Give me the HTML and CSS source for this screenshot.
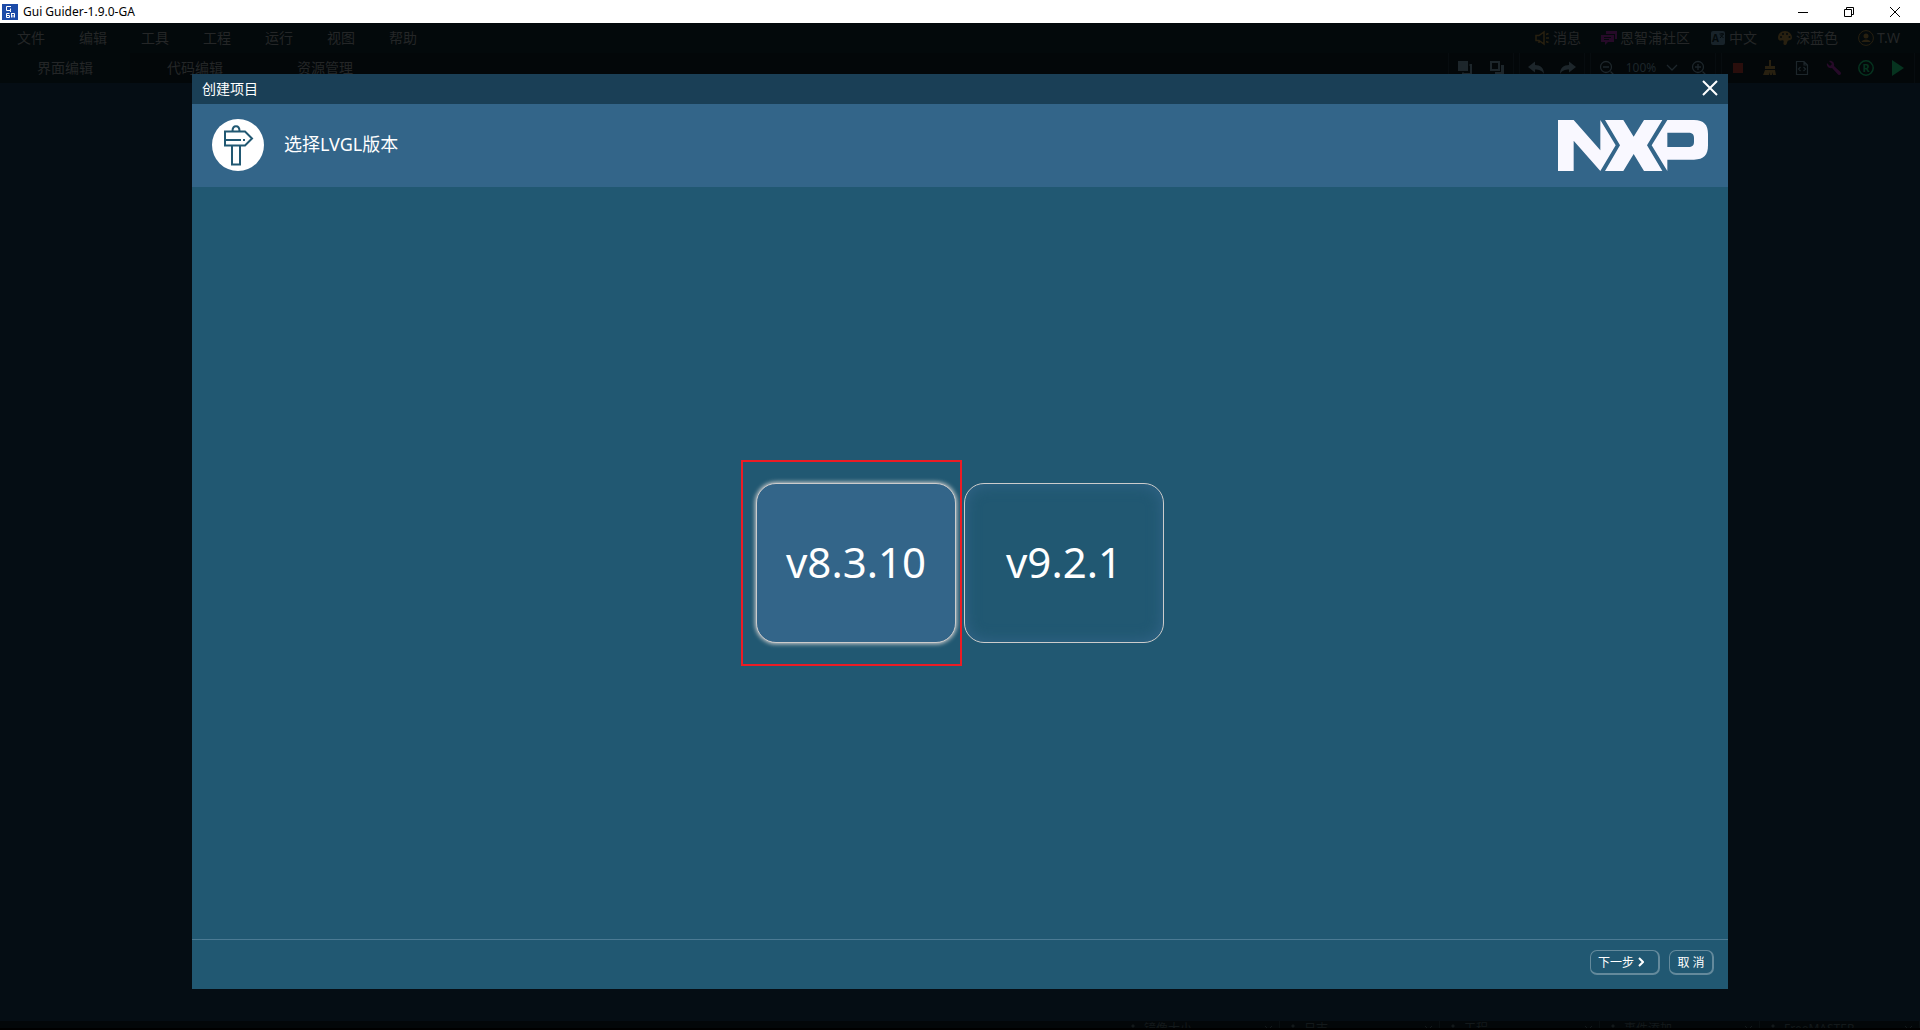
FILE: index.html
```html
<!DOCTYPE html>
<html lang="zh-CN">
<head>
    <meta charset="UTF-8" />
    <meta name="viewport" content="width=device-width, initial-scale=1.0"/>
    <title>Gui Guider-1.9.0-GA</title>
    <link rel="stylesheet" href="styles.css">
</head>
<body>
<!-- Window title bar -->
<header class="window-bar">
    <svg class="app-icon" viewBox="0 0 16 16">
        <rect width="16" height="16" fill="#1c4ba8"/>
        <path d="M9 2.500H4.500V6.500H8.500V4.500M8.500 6.500V8M4.500 9.500V13.500H7.500V11.500H5M4.500 9.500H7.500M9.500 9V13.500M9.500 9.500H12.500V13.500M11 11V13.500" fill="none" stroke="#fff" stroke-width="1"/>
    </svg>
    <span class="window-title">Gui Guider-1.9.0-GA</span>
    <div class="window-controls">
        <button aria-label="最小化"><svg width="10" height="10" viewBox="0 0 10 10"><path d="M0 5.500H10"/></svg></button>
        <button aria-label="还原"><svg width="10" height="10" viewBox="0 0 10 10"><path d="M.5 2.500H7.500V9.500H.5ZM2.500 2.500V.5H9.500V7.500H7.500"/></svg></button>
        <button aria-label="关闭"><svg width="10" height="10" viewBox="0 0 10 10"><path d="M0 0L10 10M10 0L0 10"/></svg></button>
    </div>
</header>

<div class="app">
    <!-- Menu -->
    <div class="menu-bar">
        <nav class="menu">
            <button>文件</button>
            <button>编辑</button>
            <button>工具</button>
            <button>工程</button>
            <button>运行</button>
            <button>视图</button>
            <button>帮助</button>
        </nav>
        <div class="menu-right">
            <button>
                <svg class="gold" viewBox="0 0 16 16"><path d="M2 5.500H5L10 2V14L5 10.500H2ZM5 10.500V13M12 8H15M12 4.500L14.500 3.500M12 11.500L14.500 12.500" fill="none" stroke="currentColor" stroke-width="1.500"/></svg>
                消息
            </button>
            <button>
                <svg class="purple" viewBox="0 0 16 16"><path d="M5 1H16V9H14V4H5Z" fill="currentColor"/><path d="M0 5H13V12H7L4 15V12H0Z" fill="currentColor"/><path d="M3 7.500H10M3 9.500H8" stroke="#03090b"/></svg>
                恩智浦社区
            </button>
            <button>
                <svg class="slate" viewBox="0 0 16 16"><rect x="1" y="1" width="14" height="14" rx="2" fill="currentColor"/><text x="2" y="12" font-size="10" font-weight="bold" fill="#03090b">A</text><path d="M9.500 4H14M12 3V4M10 8L13.500 4M10.500 5L13.500 8" stroke="#03090b" fill="none"/></svg>
                中文
            </button>
            <button>
                <svg class="gold" viewBox="0 0 16 16"><path d="M8 1C3.500 1 1 4 1 7.500C1 10 2.500 11 4.500 10.500C6.500 10 7 11 6.500 12.500C6 14.500 7 15 8.500 15C10.500 15 9.500 11 11.500 10.500C14 10 15 9.500 15 7.500C15 4 12 1 8 1Z" fill="currentColor"/><g fill="#03090b"><circle cx="4" cy="7" r="1"/><circle cx="6" cy="4" r="1"/><circle cx="10" cy="4" r="1"/><circle cx="12.500" cy="7" r="1"/></g></svg>
                深蓝色
            </button>
            <button>
                <svg class="gold" viewBox="0 0 16 16"><circle cx="8" cy="8" r="7.400" fill="none" stroke="currentColor"/><circle cx="8" cy="6" r="2.500" fill="currentColor"/><path d="M3.500 12C4 8.500 12 8.500 12.500 12Z" fill="currentColor"/></svg>
                T.W
            </button>
        </div>
    </div>

    <!-- Tabs and tools -->
    <div class="tool-bar">
        <nav class="tabs">
            <button class="active">界面编辑</button>
            <button>代码编辑</button>
            <button>资源管理</button>
        </nav>
        <div class="tools">
            <div class="tool-group">
                <button aria-label="置于顶层"><svg viewBox="0 0 16 16"><path d="M1 1H11V11H1Z" fill="currentColor"/><path d="M12.500 5H14V14H6V12.500" fill="none" stroke="currentColor" stroke-width="2"/></svg></button>
                <button aria-label="置于底层"><svg viewBox="0 0 16 16"><path d="M2 2H10V10H2Z" fill="none" stroke="currentColor" stroke-width="2"/><path d="M12 5H15V15H6V12H12Z" fill="currentColor"/></svg></button>
            </div>
            <div class="tool-group">
                <button aria-label="撤销"><svg viewBox="0 0 16 16"><path d="M0 7L7 1.500V5C12.500 5 16 8 16 14C14 10.500 11 9.500 7 9.500V12.500Z" fill="currentColor"/></svg></button>
                <button aria-label="重做"><svg viewBox="0 0 16 16"><path d="M16 7L9 1.500V5C3.500 5 0 8 0 14C2 10.500 5 9.500 9 9.500V12.500Z" fill="currentColor"/></svg></button>
            </div>
            <div class="tool-group">
                <button aria-label="缩小"><svg viewBox="0 0 16 16"><path d="M11.500 11.500L15 15M4 7H10" stroke="currentColor" stroke-width="1.300"/><circle cx="7" cy="7" r="5.500" fill="none" stroke="currentColor" stroke-width="1.300"/></svg></button>
                <button class="zoom-level">100% <svg viewBox="0 0 16 16"><path d="M3 5L8 10L13 5" fill="none" stroke="currentColor" stroke-width="1.300"/></svg></button>
                <button aria-label="放大"><svg viewBox="0 0 16 16"><path d="M11.500 11.500L15 15M4 7H10M7 4V10" stroke="currentColor" stroke-width="1.300"/><circle cx="7" cy="7" r="5.500" fill="none" stroke="currentColor" stroke-width="1.300"/></svg></button>
            </div>
            <div class="tool-group">
                <button class="red" aria-label="停止"><svg viewBox="0 0 16 16"><rect x="3" y="3" width="10" height="10" fill="currentColor"/></svg></button>
                <button class="gold" aria-label="清理"><svg viewBox="0 0 16 16"><path d="M7 0H9V6H13V9H3V6H7ZM3 10H13L14 15H11V12L10 15H8V12L7 15H1Z" fill="currentColor"/></svg></button>
                <button aria-label="代码"><svg viewBox="0 0 16 16"><path d="M2.500 1.500H10L13.500 5V14.500H2.500ZM10 1.500V5H13.500M6.500 7L4.500 9L6.500 11M9.500 7L11.500 9L9.500 11" fill="none" stroke="currentColor" stroke-width="1.200"/></svg></button>
                <button class="purple" aria-label="设置"><svg viewBox="0 0 16 16"><path d="M3 1L6 4L4 6L1 3C0 6 3 9 6 8L12 14.500C14 16 16 14 14.500 12L8 6C9 3 6 0 3 1Z" fill="currentColor"/></svg></button>
                <button class="green" aria-label="运行模拟器"><svg viewBox="0 0 16 16"><circle cx="8" cy="8" r="7.200" fill="none" stroke="currentColor" stroke-width="1.500"/><text x="4.500" y="12" font-size="11" font-weight="bold" fill="currentColor">R</text></svg></button>
                <button class="green" aria-label="运行"><svg viewBox="0 0 16 16"><path d="M2 0L14 8L2 16Z" fill="currentColor"/></svg></button>
            </div>
        </div>
    </div>

    <main class="workspace"></main>

    <!-- Collapsed panels -->
    <footer class="panels">
        <div class="panel"><svg viewBox="0 0 10 10"><path d="M5 0L7 2L5 4L3 2ZM2 4L4 6L2 8L0 6ZM8 4L10 6L8 8L6 6Z"/></svg><span>镜像大小</span><svg class="panel-close" viewBox="0 0 10 10"><path d="M2 2L9 9M9 2L2 9"/></svg></div>
        <div class="panel"><svg viewBox="0 0 10 10"><path d="M5 0L7 2L5 4L3 2ZM2 4L4 6L2 8L0 6ZM8 4L10 6L8 8L6 6Z"/></svg><span>日志</span><svg class="panel-close" viewBox="0 0 10 10"><path d="M2 2L9 9M9 2L2 9"/></svg></div>
        <div class="panel"><svg viewBox="0 0 10 10"><path d="M5 0L7 2L5 4L3 2ZM2 4L4 6L2 8L0 6ZM8 4L10 6L8 8L6 6Z"/></svg><span>工程</span><svg class="panel-close" viewBox="0 0 10 10"><path d="M2 2L9 9M9 2L2 9"/></svg></div>
        <div class="panel"><svg viewBox="0 0 10 10"><path d="M5 0L7 2L5 4L3 2ZM2 4L4 6L2 8L0 6ZM8 4L10 6L8 8L6 6Z"/></svg><span>事件添加</span><svg class="panel-close" viewBox="0 0 10 10"><path d="M2 2L9 9M9 2L2 9"/></svg></div>
        <div class="panel"><svg viewBox="0 0 10 10"><path d="M5 0L7 2L5 4L3 2ZM2 4L4 6L2 8L0 6ZM8 4L10 6L8 8L6 6Z"/></svg><span>FreeMASTER</span><svg class="panel-close" viewBox="0 0 10 10"><path d="M2 2L9 9M9 2L2 9"/></svg></div>
    </footer>

    <!-- Create project dialog -->
    <div class="overlay">
        <section class="dialog" role="dialog" aria-labelledby="dialogTitle">
            <div class="dialog-bar">
                <span id="dialogTitle">创建项目</span>
                <button class="close-btn" aria-label="关闭"><svg width="16" height="16" viewBox="0 0 16 16"><path d="M1 1L15 15M15 1L1 15" stroke="#fff" stroke-width="2"/></svg></button>
            </div>
            <div class="dialog-header">
                <div class="step-icon">
                    <svg width="52" height="52" viewBox="0 0 52 52" fill="none" stroke="#215872" stroke-width="2">
                        <path d="M20.500 12C20.500 5.500 27.500 5.500 27.500 12M13 12.500H33L40 19.500L33 26.500H13ZM13 21H29M20 27V45.500H28V27"/>
                        <path d="M31 21H33"/>
                    </svg>
                </div>
                <h2>选择LVGL版本</h2>
                <svg class="logo" width="150" height="51" viewBox="0 0 450 153" fill="#f9f8ff" role="img" aria-label="NXP">
                    <path d="M0 0H47L127 91V0L173 76L127 153L47 62V153H0Z"/>
                    <path d="M141 0H196L227 50L258 0H313L267 76L313 153H258L227 102L196 153H141L186 76Z"/>
                    <path fill-rule="evenodd" d="M328 0H408C438 0 450 15 450 42V76C450 105 438 119 408 119H328V153L281 76ZM328 38V81H391C403 81 408 76 408 65V54C408 43 403 38 391 38Z"/>
                </svg>
            </div>
            <div class="dialog-body">
                <div class="versions">
                    <button class="version selected">v8.3.10</button>
                    <button class="version">v9.2.1</button>
                    <div class="marker"></div>
                </div>
            </div>
            <div class="dialog-footer">
                <button class="btn next-btn">下一步<svg width="6" height="10" viewBox="0 0 6 10"><path d="M1 1L5 5L1 9" fill="none" stroke="#fff" stroke-width="2"/></svg></button>
                <button class="btn">取 消</button>
            </div>
        </section>
    </div>
</div>
</body>
</html>
```
FILE: styles.css
```css
* {
    box-sizing: border-box;
}

body {
    margin: 0;
    height: 100vh;
    display: flex;
    flex-direction: column;
    overflow: hidden;
    background: #050d14;
    font-family: "Noto Sans", "Noto Sans CJK SC", sans-serif;
    font-size: 14px;
}

button {
    margin: 0;
    padding: 0;
    border: none;
    background: none;
    color: inherit;
    font: inherit;
    cursor: pointer;
}

svg {
    flex-shrink: 0;
}

/* Window title bar */
.window-bar {
    display: flex;
    align-items: center;
    flex-shrink: 0;
    height: 23px;
    padding: 0 2px;
    background: #fff;
    color: #000;
}

.app-icon {
    width: 16px;
    height: 16px;
}

.window-title {
    margin-left: 5px;
    font-size: 12px;
    line-height: 23px;
}

.window-controls {
    display: flex;
    margin-left: auto;
}

.window-controls button {
    display: flex;
    align-items: center;
    justify-content: center;
    width: 46px;
    height: 20px;
}

.window-controls svg {
    fill: none;
    stroke: #000;
}

/* Application behind the dialog */
.app {
    position: relative;
    flex: 1;
    display: flex;
    flex-direction: column;
    min-height: 0;
    color: #242627;
}

.menu-bar,
.tool-bar {
    display: flex;
    justify-content: space-between;
    flex-shrink: 0;
    height: 30px;
    line-height: 30px;
}

.menu-bar {
    background: #03090b;
}

.tool-bar {
    background: #030709;
}

.menu button {
    width: 62px;
}

.menu,
.tabs {
    display: flex;
}

.tabs button {
    width: 130px;
}

.tabs .active {
    background: #03090b;
}

.menu-right {
    display: flex;
    gap: 20px;
    padding-right: 20px;
}

.menu-right button {
    display: flex;
    align-items: center;
    gap: 3px;
}

.menu-right svg {
    width: 16px;
    height: 16px;
}

.tools {
    display: flex;
    gap: 5px;
    padding-right: 5px;
    color: #1d262b;
}

.tool-group {
    display: flex;
    border-left: 1px solid #070c0f;
    border-right: 1px solid #070c0f;
}

.tool-group button {
    display: flex;
    align-items: center;
    justify-content: center;
    width: 32px;
}

.tool-group svg {
    width: 16px;
    height: 16px;
}

.tool-group .zoom-level {
    width: 60px;
    gap: 8px;
    font-size: 12px;
}

.gold,
.tool-group .gold {
    color: #282010;
}

.purple,
.tool-group .purple {
    color: #260a28;
}

.slate {
    color: #18232a;
}

.red {
    color: #2a0e0c;
}

.green {
    color: #06331f;
}

.workspace {
    flex: 1;
}

/* Only the top edge of the panels is visible */
.panels {
    display: flex;
    justify-content: flex-end;
    flex-shrink: 0;
    height: 9px;
    overflow: hidden;
    background: #030709;
    border-bottom: 2px solid #000;
    color: #13191b;
    font-size: 12px;
    line-height: 16px;
}

.panel {
    display: flex;
    align-items: flex-start;
    gap: 6px;
    width: 160px;
    padding: 0 6px 0 8px;
    border-right: 1px solid #080e10;
}

.panel svg {
    width: 10px;
    height: 10px;
    margin-top: 3px;
    fill: currentColor;
}

.panel .panel-close {
    margin-left: auto;
    stroke: currentColor;
}

/* Dialog */
.overlay {
    position: absolute;
    inset: 0;
    padding: 51px 10% 41px;
    display: flex;
}

.dialog {
    flex: 1;
    display: flex;
    flex-direction: column;
    background: #215872;
    color: #fff;
}

.dialog-bar {
    display: flex;
    align-items: center;
    justify-content: space-between;
    height: 30px;
    padding: 0 10px 2px;
    background: #1a3f56;
}

.close-btn {
    display: flex;
}

.dialog-header {
    display: flex;
    align-items: center;
    gap: 20px;
    height: 83px;
    padding: 0 20px 1px;
    background: #336589;
}

.step-icon {
    width: 52px;
    height: 52px;
    border-radius: 50%;
    background: #fff;
}

.dialog-header h2 {
    margin: 0;
    padding-bottom: 4px;
    font-size: 18px;
    font-weight: 400;
}

.logo {
    margin-left: auto;
}

.dialog-body {
    flex: 1;
    display: flex;
    align-items: center;
    justify-content: center;
}

.versions {
    position: relative;
    display: flex;
    gap: 8px;
}

.version {
    width: 200px;
    height: 160px;
    padding-bottom: 3px;
    border: 1px solid #ccc;
    border-radius: 20px;
    box-shadow: inset 0 0 15px #336589;
    font-size: 42px;
    line-height: 60px;
}

.version.selected {
    background: #336589;
    box-shadow: 0 0 4px 1px #ccc;
}

/* Red frame around the chosen version */
.marker {
    position: absolute;
    top: -23px;
    left: -15px;
    width: 221px;
    height: 206px;
    border: 2px solid #ec1c24;
    pointer-events: none;
}

.dialog-footer {
    display: flex;
    align-items: center;
    justify-content: flex-end;
    gap: 9px;
    height: 50px;
    padding: 0 14px 4px;
    border-top: 1px solid #4b7a93;
}

.btn {
    display: flex;
    align-items: center;
    justify-content: center;
    gap: 4px;
    width: 45px;
    height: 25px;
    padding-bottom: 1px;
    border: 1px solid #648a9c;
    border-right-width: 2px;
    border-bottom-width: 2px;
    border-radius: 7px;
    font-size: 12px;
}

.next-btn {
    width: 70px;
    justify-content: flex-start;
    padding-left: 7px;
}
```
